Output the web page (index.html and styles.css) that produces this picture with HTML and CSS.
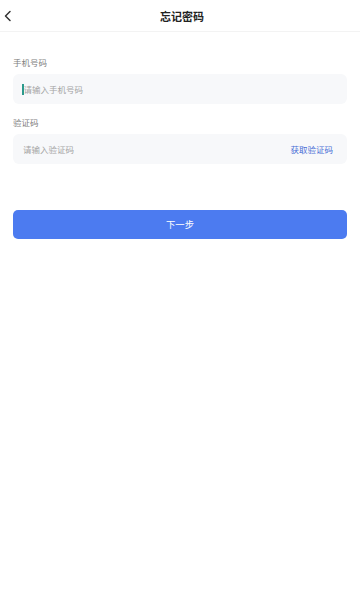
FILE: index.html
```html
<!DOCTYPE html>
<html lang="zh-CN">
<head>
<meta charset="utf-8">
<meta name="viewport" content="width=360">
<title>忘记密码</title>
<link rel="stylesheet" href="styles.css">
</head>
<body>
<header class="topbar">
  <span class="back">
    <svg width="12" height="14" viewBox="0 0 12 14"><polyline points="8,2.5 3.5,7 8,11.5" fill="none" stroke="#333" stroke-width="1.5" stroke-linecap="round" stroke-linejoin="round"/></svg>
  </span>
  <h1 class="title">忘记密码</h1>
</header>
<main class="form">
  <div class="group">
    <div class="label">手机号码</div>
    <div class="field"><span class="caret"></span><span class="ph">请输入手机号码</span></div>
  </div>
  <div class="group">
    <div class="label">验证码</div>
    <div class="field"><span class="ph">请输入验证码</span><span class="code">获取验证码</span></div>
  </div>
  <button class="next">下一步</button>
</main>
</body>
</html>
```
FILE: styles.css
```css
* { box-sizing: border-box; }
body {
  margin: 0;
  background: #fff;
  font-family: "Noto Sans CJK SC", "Noto Sans", sans-serif;
  color: #222;
}
.topbar {
  position: relative;
  height: 32px;
  border-bottom: 1px solid #f3f3f3;
  display: flex;
  align-items: center;
  justify-content: center;
}
.back {
  position: absolute;
  left: 2px;
  top: 9px;
  display: flex;
}
.title {
  margin: 0;
  font-size: 11px;
  font-weight: 600;
  color: #222;
  line-height: 14px;
  padding-left: 4px;
}
.form {
  padding: 24px 13px 0;
  display: flex;
  flex-direction: column;
}
.group { display: flex; flex-direction: column; gap: 6px; margin-bottom: 12px; }
.label {
  font-size: 8.5px;
  line-height: 12px;
  color: #808080;
}
.field {
  height: 30px;
  background: #f7f8fa;
  border-radius: 6px;
  padding: 0 14px 0 10px;
  display: flex;
  align-items: center;
  position: relative;
  font-size: 8.5px;
}
.caret {
  width: 1.5px;
  height: 11px;
  background: #2b9a8c;
  margin-left: -1px;
}
.ph { color: #a5a5a5; }
.code { margin-left: auto; color: #4a6fd6; }
.next {
  margin-top: 34px;
  height: 29px;
  border: none;
  border-radius: 5px;
  background: #4c7bf0;
  color: #fff;
  font-family: inherit;
  font-size: 9.3px;
  line-height: 12px;
  padding: 0 0 2px;
}
```
